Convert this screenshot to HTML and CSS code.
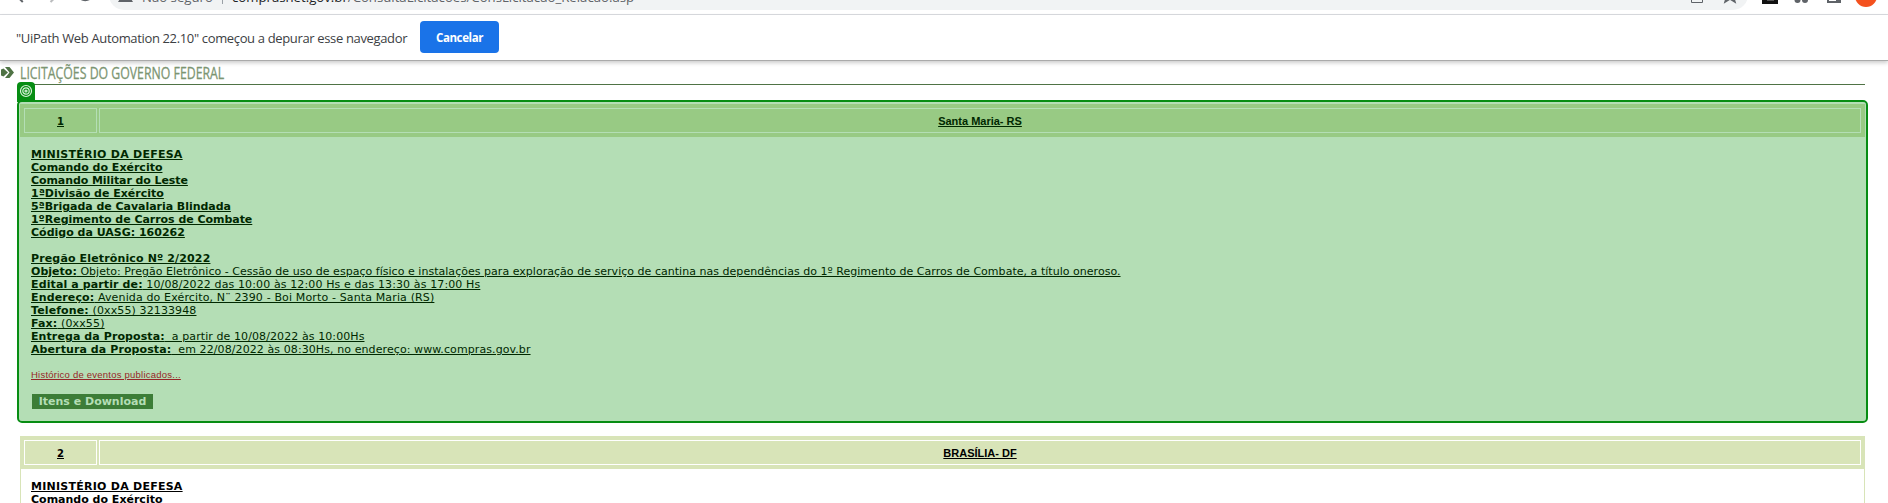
FILE: index.html
```html
<!DOCTYPE html>
<html lang="pt-BR">
<head>
<meta charset="utf-8">
<title>Licitações do Governo Federal</title>
<link rel="stylesheet" href="styles.css">
</head>
<body>
<header class="toolbar">
  <svg class="nav" width="110" height="14" viewBox="0 0 110 14" fill="none" stroke="#5f6368" stroke-width="2">
    <path d="M23 2l-7-7M80 -3a6.500 5 0 0 0 12 0"/><path d="M51 2l7-7" stroke="#babcbe"/>
  </svg>
  <div class="omnibox">
    <svg class="warn" width="16" height="4" viewBox="0 0 16 4"><path d="M3-3h9l3 5H0z" fill="#5f6368"/></svg>
    <span class="insecure">Não seguro</span><span class="divider"></span>
    <span class="url"><b>comprasnet.gov.br</b>/ConsultaLicitacoes/ConsLicitacao_Relacao.asp</span>
    <svg class="actions" width="60" height="10" viewBox="0 0 60 10" fill="none" stroke="#5f6368"><path d="M3.500-5v7.500h11V-1" /><path d="M37 2l1.500-5h7L47 2l-5-3z" stroke-width="1.500"/></svg>
  </div>
  <svg class="ext" width="130" height="14" viewBox="0 0 130 14">
    <path d="M8-6h16V4H8z" fill="#111"/><path d="M13-1h7v2h-7z" fill="#555"/>
    <g fill="#5f6368"><circle cx="43.500" cy="0" r="3"/><circle cx="51" cy="0" r="3"/></g>
    <path d="M73-6h14V3H73zM75-6v7h7v-7z" fill="#5f6368" fill-rule="evenodd"/>
    <circle cx="112" cy="-4" r="11" fill="#f4511e"/>
  </svg>
</header>
<div class="infobar">
  <span class="message">"UiPath Web Automation 22.10" começou a depurar esse navegador</span>
  <button class="cancel">Cancelar</button>
</div>
<main>
  <h1 class="title">
    <svg class="bullet" width="15" height="14" viewBox="0 0 15 14" fill="#4f7345"><path d="M1 4.500l2.500-1L8 7.500l-4.500 4-2.500-1z"/><path d="M5 2h4.500L14 7.500 9.500 13H5l4.500-5.500z"/></svg>
    <span class="title-text">LICITAÇÕES DO GOVERNO FEDERAL</span>
  </h1>
  <div class="rule"></div>
  <section class="card selected">
    <span class="target"><svg width="18" height="20" viewBox="0 0 18 20" fill="none" stroke="#d9f2d9" stroke-width="1.200"><circle cx="9" cy="9" r="5.500"/><circle cx="9" cy="9" r="3.200"/><circle cx="9" cy="9" r="1"/></svg></span>
    <div class="head"><span class="cell num">1</span><span class="cell place">Santa Maria- RS</span></div>
    <div class="body">
      <p class="ministry"><b>MINISTÉRIO DA DEFESA</b></p>
      <p><b>Comando do Exército</b></p>
      <p class="tight"><b>Comando Militar do Leste</b></p>
      <p><b>1ªDivisão de Exército</b></p>
      <p class="snug"><b>5ªBrigada de Cavalaria Blindada</b></p>
      <p class="snug"><b>1ºRegimento de Carros de Combate</b></p>
      <p><b>Código da UASG: 160262</b></p>
      <p>&nbsp;</p>
      <p class="wide"><b>Pregão Eletrônico Nº 2/2022</b></p>
      <p class="object"><u><b>Objeto:</b> Objeto: Pregão Eletrônico - Cessão de uso de espaço físico e instalações para exploração de serviço de cantina nas dependências do 1º Regimento de Carros de Combate, a título oneroso.</u></p>
      <p class="loose"><u><b>Edital a partir de:</b> 10/08/2022 das 10:00 às 12:00 Hs e das 13:30 às 17:00 Hs</u></p>
      <p class="wide"><u><b>Endereço:</b> Avenida do Exército, N¨ 2390 - Boi Morto - Santa Maria (RS)</u></p>
      <p class="loose"><u><b>Telefone:</b> (0xx55) 32133948</u></p>
      <p class="wide"><u><b>Fax:</b> (0xx55)</u></p>
      <p class="proposal"><u><b>Entrega da Proposta:</b>&nbsp; a partir de 10/08/2022 às 10:00Hs</u></p>
      <p class="proposal"><u><b>Abertura da Proposta:</b>&nbsp; em 22/08/2022 às 08:30Hs, no endereço: www.compras.gov.br</u></p>
      <a class="history">Histórico de eventos publicados...</a>
      <button class="download">Itens e Download</button>
    </div>
  </section>
  <section class="card">
    <div class="head"><span class="cell num">2</span><span class="cell place">BRASÍLIA- DF</span></div>
    <div class="body">
      <p class="ministry"><b>MINISTÉRIO DA DEFESA</b></p>
      <p><b>Comando do Exército</b></p>
    </div>
  </section>
</main>
</body>
</html>
```
FILE: styles.css
```css
* { box-sizing: border-box; }
body { margin: 0; height: 503px; overflow: hidden; background: #fff; color: #000; font: 11px/13px "DejaVu Sans", sans-serif; }
.toolbar { display: flex; height: 15px; overflow: hidden; border-bottom: 1px solid #dadce0; font: 13.2px/20px "Open Sans", sans-serif; color: #5f6368; }
.nav { flex: none; width: 109px; }
.omnibox { display: flex; flex: none; width: 1639px; height: 30px; margin-top: -20px; padding-top: 7px; border-radius: 15px; background: #f1f3f4; }
.warn { margin: 13px 0 0 9px; }
.insecure { width: 73px; margin-left: 8px; white-space: nowrap; }
.divider { width: 1px; height: 14px; margin: 3px 9px 0 7px; background: #9aa0a6; }
.url b { font-weight: 400; color: #202124; }
.actions { margin: 13px 0 0 auto; }
.ext { margin-left: 6px; }
.infobar { display: flex; align-items: center; height: 46px; padding: 0 0 0 16px; gap: 13px; border-bottom: 1px solid #aaa; box-shadow: 0 2px 4px #0003; color: #3c4043; }
.message { width: 391px; white-space: nowrap; font: 13px/20px "Open Sans", sans-serif; letter-spacing: -.35px; }
.cancel { width: 79px; height: 32px; margin-bottom: 1px; padding: 0; border: 0; border-radius: 4px; background: #1a73e8; color: #fff; font: 700 11.5px "Open Sans", sans-serif; letter-spacing: -.4px; }
main { padding: 4px 20px 0; }
.title { display: flex; height: 19px; margin: 0 0 0 -20px; gap: 5px; color: #7c9572; font: 400 17px/16px "Open Sans", sans-serif; }
.bullet { flex: none; }
.title-text { white-space: nowrap; transform: scaleX(.723); transform-origin: 0 0; -webkit-text-stroke: .3px #7c9572; }
.rule { height: 1px; width: 1845px; background: #4f7345; }
.card { position: relative; width: 1845px; border: 1px solid #d8e4b8; border-top: 0; --line: #fff; }
.head { display: flex; gap: 2px; height: 33px; margin: 0 -1px; padding: 4px; background: #d8e4b8; font: 700 11px/25px "Liberation Sans", sans-serif; text-align: center; text-decoration: underline; }
.cell { height: 25px; border: 1px solid var(--line); }
.num { width: 73px; font-family: "DejaVu Sans", sans-serif; font-size: 10px; }
.place { flex: 1; }
.body { padding: 11px 10px 0; }
.body p { margin: 0; height: 13px; white-space: nowrap; }
.body p b { text-decoration: underline; }
.body u b { text-decoration: none; }
.body .ministry { letter-spacing: .25px; }
.body .tight { letter-spacing: -.08px; }
.body .snug { letter-spacing: -.04px; }
.body .wide { letter-spacing: .14px; }
.body .object { letter-spacing: .03px; }
.body .loose { letter-spacing: .12px; }
.body .proposal { letter-spacing: .09px; }
.selected { height: 316px; margin: 19px 0 16px; border-color: #98ca84; color: #002800; --line: #b4deb5; background: #b4deb5; }
.selected::before { content: ""; position: absolute; inset: -4px; border: 2px solid #078d13; border-radius: 5px; box-shadow: inset 0 0 0 2px #b4deb5; }
.selected .head { position: relative; background: #98ca84; }
.target { position: absolute; left: -4px; top: -22px; width: 18px; height: 20px; border-radius: 4px 4px 0 0; background: #078d13; }
.history { display: block; margin-top: 12px; color: #962727; font: 9.5px/13px "Liberation Sans", sans-serif; letter-spacing: .23px; text-decoration: underline; }
.download { width: 121px; height: 15px; margin: 13px 0 0 1px; padding: 0; border: 0; background: #3c7d37; color: #b4deb5; font: 700 11px/15px "DejaVu Sans", sans-serif; display: block; }
```
